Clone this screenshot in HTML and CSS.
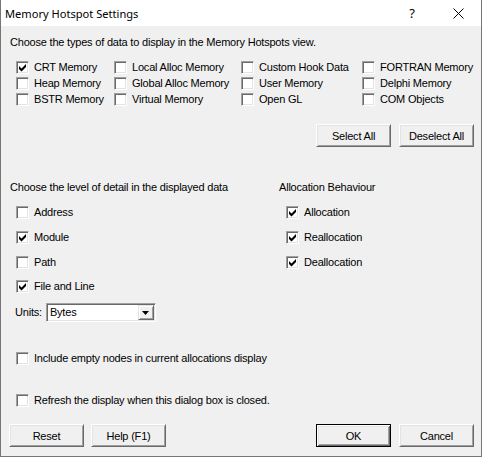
FILE: index.html
```html
<!DOCTYPE html>
<html>
<head>
<meta charset="utf-8">
<link rel="stylesheet" href="styles.css">
</head>
<body>
<div class="window">
  <div class="titlebar">
    <span class="title">Memory Hotspot Settings</span>
    <span class="cap cap-help">?</span>
    <span class="cap cap-close"><svg width="11" height="11" viewBox="0 0 11 11"><path d="M0.5 0.5 L10.5 10.5 M10.5 0.5 L0.5 10.5" stroke="#000" stroke-width="1" fill="none"/></svg></span>
  </div>
  <div class="content">
    <div class="text">Choose the types of data to display in the Memory Hotspots view.</div>
    <div class="types">
      <label class="check"><span class="cb on"><svg viewBox="0 0 11 11"><polygon points="2,4 4.5,6.5 9,2 9,5 4.5,9.5 2,7"/></svg></span>CRT Memory</label>
      <label class="check"><span class="cb"></span>Local Alloc Memory</label>
      <label class="check"><span class="cb"></span>Custom Hook Data</label>
      <label class="check"><span class="cb"></span>FORTRAN Memory</label>
      <label class="check"><span class="cb"></span>Heap Memory</label>
      <label class="check"><span class="cb"></span>Global Alloc Memory</label>
      <label class="check"><span class="cb"></span>User Memory</label>
      <label class="check"><span class="cb"></span>Delphi Memory</label>
      <label class="check"><span class="cb"></span>BSTR Memory</label>
      <label class="check"><span class="cb"></span>Virtual Memory</label>
      <label class="check"><span class="cb"></span>Open GL</label>
      <label class="check"><span class="cb"></span>COM Objects</label>
    </div>
    <div class="sel-row">
      <button class="btn">Select All</button>
      <button class="btn">Deselect All</button>
    </div>
    <div class="detail">
      <div class="col-left">
        <div class="text">Choose the level of detail in the displayed data</div>
        <label class="check drow"><span class="cb"></span>Address</label>
        <label class="check drow"><span class="cb on"><svg viewBox="0 0 11 11"><polygon points="2,4 4.5,6.5 9,2 9,5 4.5,9.5 2,7"/></svg></span>Module</label>
        <label class="check drow"><span class="cb"></span>Path</label>
        <label class="check drow last"><span class="cb on"><svg viewBox="0 0 11 11"><polygon points="2,4 4.5,6.5 9,2 9,5 4.5,9.5 2,7"/></svg></span>File and Line</label>
      </div>
      <div class="col-right">
        <div class="text">Allocation Behaviour</div>
        <label class="check drow"><span class="cb on"><svg viewBox="0 0 11 11"><polygon points="2,4 4.5,6.5 9,2 9,5 4.5,9.5 2,7"/></svg></span>Allocation</label>
        <label class="check drow"><span class="cb on"><svg viewBox="0 0 11 11"><polygon points="2,4 4.5,6.5 9,2 9,5 4.5,9.5 2,7"/></svg></span>Reallocation</label>
        <label class="check drow"><span class="cb on"><svg viewBox="0 0 11 11"><polygon points="2,4 4.5,6.5 9,2 9,5 4.5,9.5 2,7"/></svg></span>Deallocation</label>
      </div>
    </div>
    <div class="units">
      <span class="units-label">Units:</span>
      <div class="combo">
        <span class="combo-text">Bytes</span>
        <span class="combo-btn"><svg width="7" height="4" viewBox="0 0 7 4"><polygon points="0,0 7,0 3.5,4" fill="#000"/></svg></span>
      </div>
    </div>
    <label class="check opt opt-include"><span class="cb"></span>Include empty nodes in current allocations display</label>
    <label class="check opt opt-refresh"><span class="cb"></span>Refresh the display when this dialog box is closed.</label>
    <div class="bottom-row">
      <div class="btn-group">
        <button class="btn">Reset</button>
        <button class="btn">Help (F1)</button>
      </div>
      <div class="btn-group right">
        <button class="btn default">OK</button>
        <button class="btn">Cancel</button>
      </div>
    </div>
  </div>
</div>
</body>
</html>
```

FILE: styles.css
```css
body {
  margin: 0;
  background: #ffffff;
  font-family: "Liberation Sans", Arial, sans-serif;
}

.window {
  width: 482px;
  height: 457px;
  box-sizing: border-box;
  border: 1px solid #767676;
  border-top: none;
  background: #f0f0f0;
  display: flex;
  flex-direction: column;
}

.titlebar {
  height: 26px;
  flex: none;
  background: #ffffff;
  display: flex;
  align-items: center;
}

.title {
  flex: 1;
  padding-left: 4px;
  font-family: "Noto Sans", "Open Sans", sans-serif;
  font-size: 11.1px;
  color: #000;
}

.cap {
  width: 46px;
  height: 26px;
  display: flex;
  align-items: center;
  justify-content: center;
  font-family: "Noto Sans", sans-serif;
  font-size: 13px;
  color: #000;
}

.cap-close svg {
  display: block;
}

.content {
  flex: 1;
  display: flex;
  flex-direction: column;
  padding: 10px 7px 0 9px;
  font-size: 11px;
  line-height: 13px;
  letter-spacing: -0.2px;
  color: #000;
}

.text {
  height: 13px;
  white-space: nowrap;
}

.types {
  margin-top: 10px;
  margin-left: 6px;
  display: grid;
  grid-template-columns: 98px 127px 121px 1fr;
  grid-auto-rows: 16px;
  align-items: center;
}

.check {
  display: flex;
  align-items: center;
  gap: 5px;
  white-space: nowrap;
  height: 13px;
}

.cb {
  width: 13px;
  height: 13px;
  flex: none;
  box-sizing: border-box;
  background: #ffffff;
  border: 1px solid;
  border-color: #a0a0a0 #ffffff #ffffff #a0a0a0;
  box-shadow: inset 1px 1px 0 #696969, inset -1px -1px 0 #e3e3e3;
  display: flex;
}

.cb svg {
  width: 11px;
  height: 11px;
  display: block;
  fill: #000;
}

.sel-row {
  margin-top: 17px;
  display: flex;
  justify-content: flex-end;
  gap: 8px;
}

.btn {
  width: 75px;
  height: 23px;
  box-sizing: border-box;
  padding: 0;
  margin: 0;
  background: #f0f0f0;
  border: 1px solid;
  border-color: #ffffff #696969 #696969 #ffffff;
  box-shadow: inset 1px 1px 0 #e3e3e3, inset -1px -1px 0 #a0a0a0;
  font-family: "Liberation Sans", Arial, sans-serif;
  font-size: 11px;
  letter-spacing: -0.2px;
  color: #000;
}

.btn.default {
  border-color: #000;
  box-shadow: inset 1px 1px 0 #ffffff, inset -1px -1px 0 #696969, inset 2px 2px 0 #e3e3e3, inset -2px -2px 0 #a0a0a0;
}

.detail {
  margin-top: 34px;
  display: grid;
  grid-template-columns: 269px 1fr;
}

.col-left .drow {
  margin-left: 6px;
  margin-top: 12px;
}

.col-left .drow.last {
  margin-top: 11px;
}

.col-right .drow {
  margin-left: 7px;
  margin-top: 12px;
}

.units {
  margin-top: 10px;
  margin-left: 5px;
  display: flex;
  align-items: center;
  gap: 4px;
}

.combo {
  width: 110px;
  height: 19px;
  box-sizing: border-box;
  background: #ffffff;
  border: 1px solid;
  border-color: #a0a0a0 #ffffff #ffffff #a0a0a0;
  box-shadow: inset 1px 1px 0 #696969, inset -1px -1px 0 #e3e3e3;
  display: flex;
  align-items: center;
  padding: 1px;
}

.combo-text {
  flex: 1;
  padding-left: 2px;
}

.combo-btn {
  width: 16px;
  height: 15px;
  box-sizing: border-box;
  background: #f0f0f0;
  border: 1px solid;
  border-color: #e3e3e3 #696969 #696969 #e3e3e3;
  box-shadow: inset 1px 1px 0 #ffffff, inset -1px -1px 0 #a0a0a0;
  display: flex;
  align-items: center;
  justify-content: center;
}

.opt {
  margin-left: 6px;
}

.opt-include {
  margin-top: 30px;
}

.opt-refresh {
  margin-top: 29px;
}

.bottom-row {
  margin-top: 17px;
  margin-left: -1px;
  display: flex;
  justify-content: space-between;
}

.btn-group {
  display: flex;
  gap: 7px;
}

.btn-group.right {
  gap: 8px;
}
```
